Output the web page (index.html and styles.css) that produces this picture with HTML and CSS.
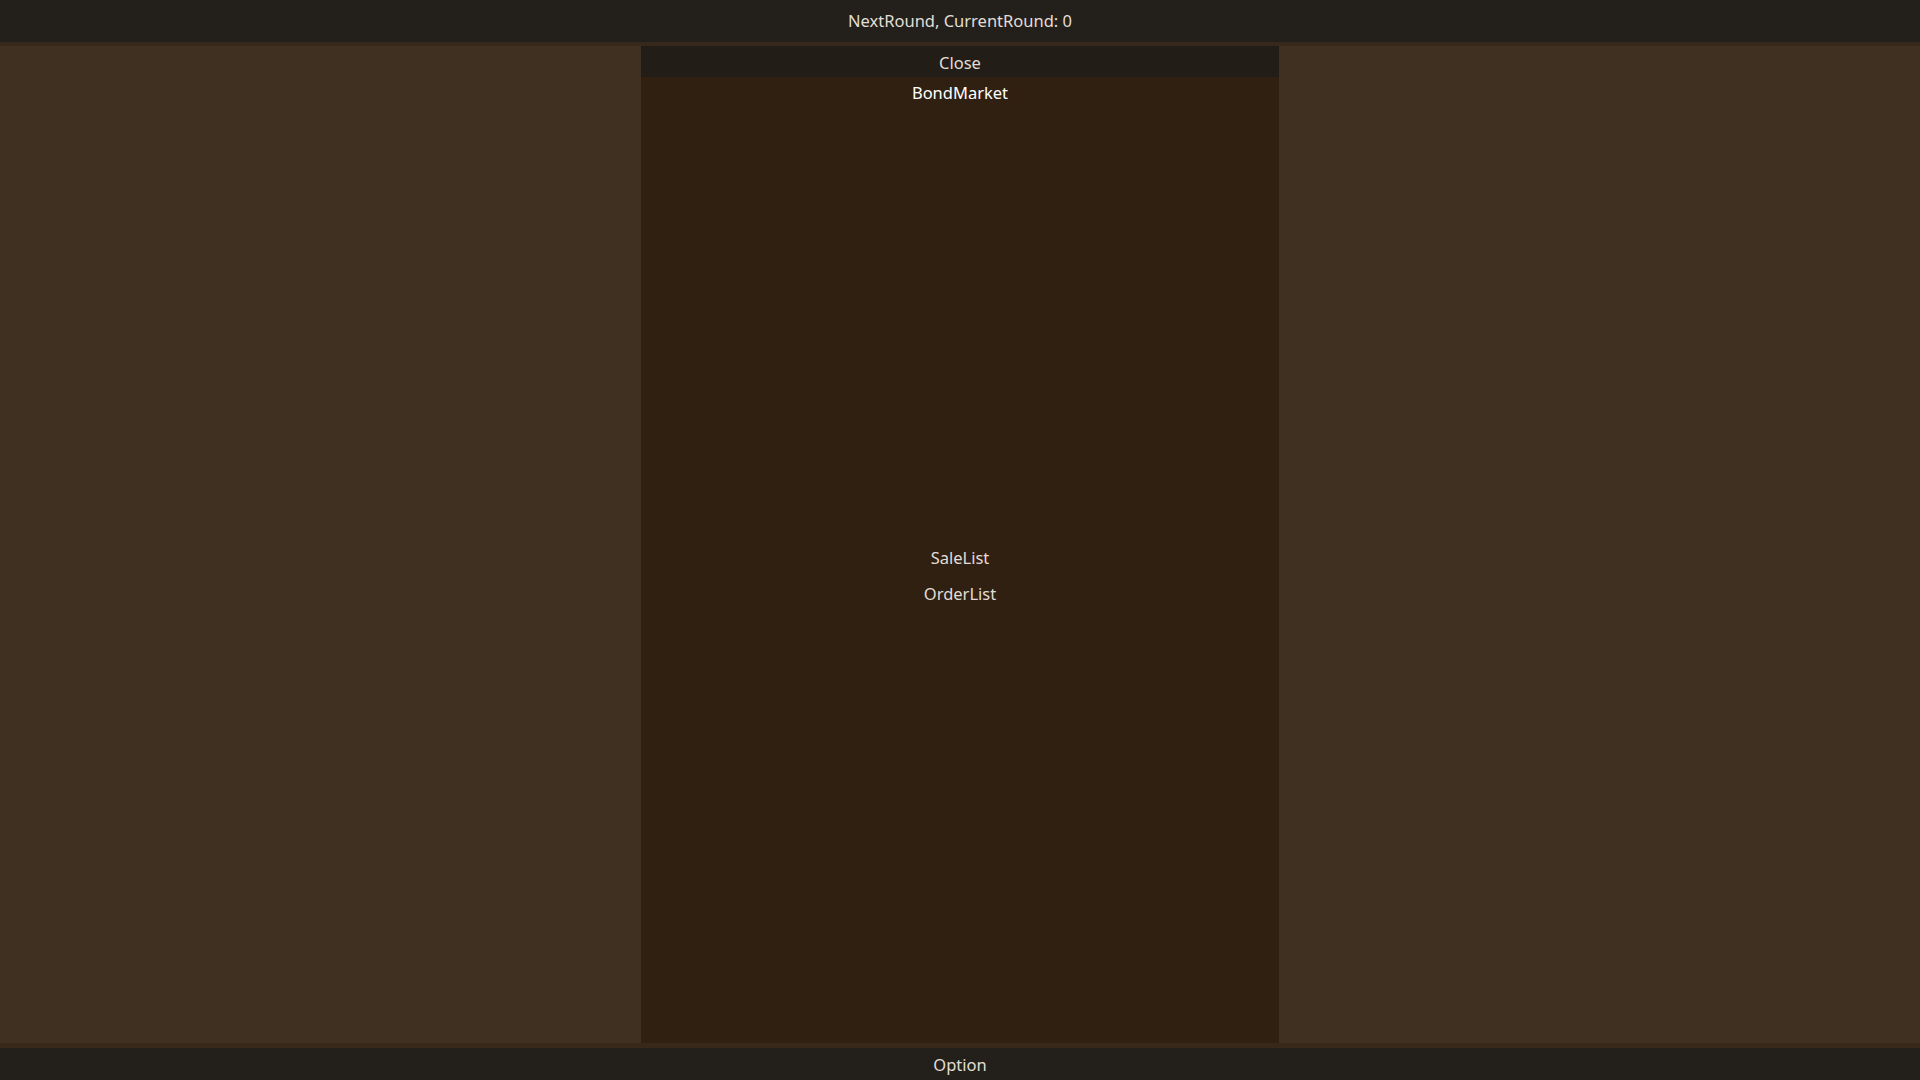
FILE: index.html
```html
<!DOCTYPE html>
<html>
<head>
<meta charset="utf-8">
<link rel="stylesheet" href="styles.css">
</head>
<body>
<div class="app">
  <div class="topbar">NextRound, CurrentRound: 0</div>
  <div class="main">
    <div class="panel">
      <div class="panel-header">Close</div>
      <div class="panel-title">BondMarket</div>
      <div class="panel-body">
        <div class="item">SaleList</div>
        <div class="item">OrderList</div>
      </div>
    </div>
  </div>
  <div class="bottombar">Option</div>
</div>
</body>
</html>
```
FILE: styles.css
```css
html, body {
  margin: 0;
  padding: 0;
  height: 100%;
}
body {
  font-family: "Noto Sans", "Open Sans", sans-serif;
  font-size: 16.5px;
  font-weight: 400;
  color: #e2ddd5;
  background: #3f3022;
}
.app {
  display: flex;
  flex-direction: column;
  height: 100vh;
}
.topbar {
  height: 42px;
  line-height: 42px;
  text-align: center;
  background: #23201b;
  border-bottom: 4px solid #36291c;
  flex: none;
}
.main {
  flex: 1;
  display: flex;
  justify-content: center;
  min-height: 0;
}
.panel {
  width: 638px;
  background: #2f2011;
  display: flex;
  flex-direction: column;
}
.panel-header {
  height: 31px;
  padding-top: 1px;
  box-sizing: border-box;
  line-height: 31px;
  text-align: center;
  background: #231d17;
}
.panel-title {
  height: 32px;
  line-height: 32px;
  text-align: center;
  color: #ffffff;
}
.panel-body {
  flex: 1;
  display: flex;
  flex-direction: column;
  justify-content: center;
  align-items: center;
}
.item {
  line-height: 36px;
}
.bottombar {
  height: 31px;
  padding-top: 1px;
  line-height: 31px;
  text-align: center;
  background: #23201b;
  border-top: 5px solid #36291c;
  flex: none;
}
```
